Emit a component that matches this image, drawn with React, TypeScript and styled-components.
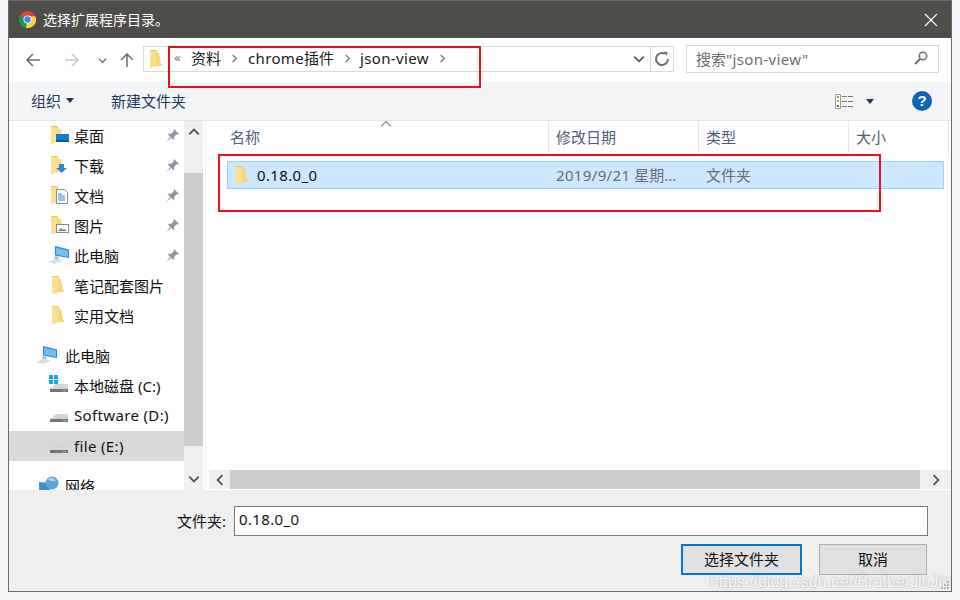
import React from "react";
import styled, { createGlobalStyle } from "styled-components";

const GlobalStyle = createGlobalStyle`
  html, body {
    margin: 0;
    background: #f5f6f8;
  }
  body {
    font-family: "Noto Sans", "Noto Sans CJK SC", sans-serif;
    font-size: 15px;
    overflow: hidden;
  }
`;

const Page = styled.div`
  width: 960px;
  height: 600px;
  padding-left: 8px;
  box-sizing: border-box;
`;

const Window = styled.div`
  position: relative;
  width: 944px;
  height: 592px;
  box-sizing: border-box;
  border: 1px solid #6a6a6a;
  display: flex;
  flex-direction: column;
  background: #fff;
`;

const Latin = styled.span`
  letter-spacing: 0.35px;
`;

const TitleBar = styled.div`
  height: 37px;
  flex: none;
  box-sizing: border-box;
  background: #4f4d4a;
  color: #fff;
  display: flex;
  align-items: center;
  padding: 0 13px 0 10px;
  gap: 7px;
  font-size: 14px;
`;

const TitleText = styled.span`
  padding-bottom: 2px;
`;

const CloseButton = styled.div`
  margin-left: auto;
  display: flex;
`;

const NavBar = styled.div`
  height: 44px;
  flex: none;
  box-sizing: border-box;
  padding: 0 0 2px 4px;
  display: flex;
  align-items: center;
`;

const NavButton = styled.div<{ $w: number }>`
  width: ${(p) => p.$w}px;
  height: 26px;
  padding-top: 2px;
  box-sizing: border-box;
  display: flex;
  align-items: center;
  justify-content: center;
`;

const AddressBar = styled.div`
  width: 531px;
  height: 26px;
  margin-left: 2px;
  box-sizing: border-box;
  border: 1px solid #d9d9d9;
  display: flex;
  align-items: center;
  padding-left: 5px;
  color: #1a1a1a;
`;

const Crumbs = styled.div`
  display: flex;
  align-items: center;
  margin-left: 12px;
  line-height: 22px;
  padding-bottom: 2px;
`;

const CrumbMark = styled.span`
  color: #777;
  font-size: 13px;
  width: 17px;
  margin-top: -2px;
`;

const CrumbSep = styled.span<{ $w: number }>`
  width: ${(p) => p.$w}px;
  display: flex;
  justify-content: center;
`;

const AddressTools = styled.div`
  margin-left: auto;
  display: flex;
  align-items: center;
  height: 100%;
`;

const AddressTool = styled.div<{ $line?: boolean }>`
  width: ${(p) => (p.$line ? 23 : 22)}px;
  height: 100%;
  box-sizing: border-box;
  display: flex;
  align-items: center;
  justify-content: center;
  ${(p) => (p.$line ? "border-left: 1px solid #d9d9d9;" : "")}
`;

const SearchBox = styled.div`
  width: 253px;
  height: 28px;
  margin-left: 12px;
  box-sizing: border-box;
  border: 1px solid #d9d9d9;
  display: flex;
  align-items: center;
  justify-content: space-between;
  padding: 0 10px 2px 9px;
  color: #6d6d6d;
`;

const Toolbar = styled.div`
  height: 39px;
  flex: none;
  box-sizing: border-box;
  background: #f4f5f7;
  border-bottom: 1px solid #e6e6e6;
  display: flex;
  align-items: center;
  padding: 0 19px 0 22px;
  color: #1e395b;
`;

const ToolItem = styled.div<{ $gap: number }>`
  display: flex;
  align-items: center;
  gap: 5px;
  margin-right: ${(p) => p.$gap}px;
  padding-bottom: 2px;
`;

const ToolRight = styled.div`
  margin-left: auto;
  display: flex;
  align-items: center;
  gap: 13px;
`;

const HelpIcon = styled.div`
  width: 20px;
  height: 20px;
  margin-left: 25px;
  border-radius: 50%;
  background: #0a64b8;
  color: #fff;
  font: bold 15px/20px "Liberation Sans", sans-serif;
  text-align: center;
`;

const Body = styled.div`
  height: 369px;
  flex: none;
  display: flex;
`;

const Sidebar = styled.div`
  width: 175px;
  flex: none;
  overflow: hidden;
  color: #111;
`;

const TreeGroup = styled.div`
  margin-bottom: 10px;
`;

const TreeRow = styled.div<{ $nested?: boolean; $active?: boolean }>`
  height: 30px;
  box-sizing: border-box;
  display: flex;
  align-items: center;
  padding: 0 5px ${(p) => (p.$active ? 1 : 2)}px ${(p) => (p.$nested ? 42 : 30)}px;
  background: ${(p) => (p.$active ? "#d9d9d9" : "transparent")};
  white-space: nowrap;
`;

const TreeIcon = styled.span<{ $nested?: boolean }>`
  width: ${(p) => (p.$nested ? 23 : 26)}px;
  flex: none;
  display: flex;
  align-items: center;
`;

const PinSlot = styled.span`
  margin-left: auto;
  display: flex;
`;

const VScroll = styled.div`
  width: 19px;
  flex: none;
  background: #efefef;
  display: flex;
  flex-direction: column;
  align-items: stretch;
`;

const VArrow = styled.div<{ $h: number; $end?: boolean }>`
  height: ${(p) => p.$h}px;
  box-sizing: border-box;
  padding: 5px 0;
  display: flex;
  align-items: ${(p) => (p.$end ? "flex-end" : "flex-start")};
  justify-content: center;
`;

const VThumb = styled.div`
  height: 273px;
  background: #cdcdcd;
`;

const Main = styled.div`
  position: relative;
  flex: 1;
  margin-left: 2px;
  border-left: 1px solid #f0f0f0;
  display: flex;
  flex-direction: column;
  min-width: 0;
`;

const HeaderRow = styled.div`
  height: 32px;
  flex: none;
  display: flex;
  color: #4c607a;
`;

const HeaderCell = styled.div<{ $w: number; $pad: number }>`
  width: ${(p) => p.$w}px;
  flex: none;
  box-sizing: border-box;
  padding-left: ${(p) => p.$pad}px;
  border-right: 1px solid #e5e5e5;
  line-height: 32px;
`;

const SortCaret = styled.div`
  position: absolute;
  left: 174px;
  top: -3px;
  display: flex;
`;

const FileArea = styled.div`
  flex: 1;
  padding: 8px 0 0 21px;
`;

const FileRow = styled.div`
  width: 717px;
  height: 28px;
  box-sizing: border-box;
  background: #cce8ff;
  border: 1px solid #99d1ff;
  display: flex;
  align-items: center;
  color: #6d6d6d;
`;

const FileCell = styled.div<{ $w: number; $pad: number }>`
  width: ${(p) => p.$w}px;
  flex: none;
  box-sizing: border-box;
  padding: 0 0 1px ${(p) => p.$pad}px;
  display: flex;
  align-items: center;
  white-space: nowrap;
`;

const FileName = styled(Latin)`
  color: #111;
  margin-left: 9px;
`;

const HScroll = styled.div`
  height: 19px;
  flex: none;
  margin-bottom: 1px;
  padding-left: 3px;
  display: flex;
`;

const HArrow = styled.div<{ $grow?: boolean }>`
  width: 21px;
  ${(p) => (p.$grow ? "flex: 1;" : "")}
  background: #efefef;
  display: flex;
  align-items: center;
  justify-content: center;
`;

const HThumb = styled.div`
  width: 690px;
  background: #cdcdcd;
`;

const Footer = styled.div`
  flex: 1;
  background: #efefef;
  padding-top: 16px;
`;

const NameRow = styled.div`
  display: flex;
  justify-content: flex-end;
  align-items: center;
  gap: 8px;
  padding-right: 23px;
  color: #111;
`;

const NameLabel = styled.span`
  padding-bottom: 2px;
`;

const NameInput = styled.div`
  width: 694px;
  height: 30px;
  box-sizing: border-box;
  border: 1px solid #7a7a7a;
  background: #fff;
  padding-left: 4px;
  line-height: 24px;
`;

const ButtonRow = styled.div`
  display: flex;
  justify-content: flex-end;
  gap: 17px;
  margin-top: 8px;
  padding-right: 24px;
`;

const DialogButton = styled.div<{ $primary?: boolean }>`
  width: ${(p) => (p.$primary ? 121 : 108)}px;
  height: 31px;
  box-sizing: border-box;
  border: ${(p) => (p.$primary ? "2px solid #0078d7" : "1px solid #adadad")};
  background: #e1e1e1;
  color: #111;
  padding-bottom: 2px;
  display: flex;
  align-items: center;
  justify-content: center;
`;

const RedBox = styled.div<{ $l: number; $t: number; $w: number; $h: number }>`
  position: absolute;
  left: ${(p) => p.$l}px;
  top: ${(p) => p.$t}px;
  width: ${(p) => p.$w}px;
  height: ${(p) => p.$h}px;
  box-sizing: border-box;
  border: 2px solid #e81123;
  pointer-events: none;
`;

const Watermark = styled.div`
  position: absolute;
  right: 0;
  bottom: -1px;
  font: 16px/20px "Liberation Sans", sans-serif;
  color: rgba(255, 255, 255, 0.9);
  text-shadow: 0 0 2px rgba(90, 90, 90, 0.55);
  white-space: nowrap;
`;

const Grip = styled.svg`
  position: absolute;
  right: 1px;
  bottom: 1px;
`;

const FolderIcon = () => (
  <svg width="13" height="18" viewBox="0 0 13 18">
    <path d="M1 0h6l1 1v15l-7 2z" fill="#f3c64f" />
    <path d="M1 1h6v15l-6 2z" fill="#fbe08f" />
    <path d="M7 3h3l2 11h1v2H7z" fill="#f6d87a" />
  </svg>
);

const Pin = () => (
  <svg width="13" height="13" viewBox="0 0 13 13">
    <path d="M8 0l5 5-1.5.6-.8-.4L8 8l.4 2-1 1L2 5.600l1-1 2 .4 2.800-2.700-.4-.8z" fill="#8a96a3" />
    <path d="M4 8l1 1-4.500 4z" fill="#8a96a3" />
  </svg>
);

const Overlay = ({ children }: { children: React.ReactNode }) => (
  <svg width="20" height="20" viewBox="0 0 20 20">
    <g transform="translate(0 1)">
      <path d="M0 0h6l1 1v15l-7 2z" fill="#f3c64f" />
      <path d="M0 1h6v15l-6 2z" fill="#fbe08f" />
      <path d="M6 3h4l1 11H6z" fill="#f6d87a" />
    </g>
    {children}
  </svg>
);

const Monitor = () => (
  <svg width="22" height="20" viewBox="0 0 22 20" style={{ marginLeft: -3, flex: "none" }}>
    <path d="M7 1l14 3.500v8.500L7 10.500z" fill="#2e86c8" />
    <path d="M8 2.500l12 3v6.500L8 9.500z" fill="#6fc0f3" />
    <path d="M0 17l8-3.500 7 2-8 3.500z" fill="#dcdfe3" />
    <path d="M7 11l4 1-1 2.500-4-1z" fill="#b6bcc2" />
  </svg>
);

const Drive = ({ win }: { win?: boolean }) => (
  <svg width="20" height="20" viewBox="0 0 20 20" style={{ marginLeft: -2, flex: "none" }}>
    {win && (
      <g fill="#12a9ea">
        <rect x="0" y="0" width="4" height="4" />
        <rect x="5" y="0" width="4" height="4" />
        <rect x="0" y="5" width="4" height="4" />
        <rect x="5" y="5" width="4" height="4" />
      </g>
    )}
    <path d="M1 14l6-5h12v5z" fill="#d5d5d5" />
    <path d="M1 14h18v3H1z" fill="#757575" />
    <rect x="14" y="15" width="3" height="1.500" fill="#63c06a" />
  </svg>
);

const Network = () => (
  <svg width="21" height="18" viewBox="0 0 21 18">
    <path d="M0 6l11 1v10H0z" fill="#3d8fd0" />
    <circle cx="13" cy="7" r="6.500" fill="#5aa6dc" />
    <path d="M9 3c3-2 6-1 8 2-3 0-6 1-8-2z" fill="#a7d8f4" />
  </svg>
);

const Chevron = ({ dir, color = "#666", size = 10, sw = 1.6 }: { dir: "up" | "down" | "left" | "right"; color?: string; size?: number; sw?: number }) => {
  const d = { up: "M1 7l4-4 4 4", down: "M1 3l4 4 4-4", left: "M7 1L3 5l4 4", right: "M3 1l4 4-4 4" }[dir];
  return (
    <svg width={size} height={size} viewBox="0 0 10 10">
      <path d={d} fill="none" stroke={color} strokeWidth={sw} />
    </svg>
  );
};

const Arrow = ({ rot, color }: { rot: number; color: string }) => (
  <svg width="16" height="16" viewBox="0 0 16 16" style={{ transform: `rotate(${rot}deg)` }}>
    <path d="M15 8H2M8 2L2 8l6 6" fill="none" stroke={color} strokeWidth="1.500" />
  </svg>
);

const Caret = () => (
  <svg width="8" height="5" viewBox="0 0 8 5">
    <path d="M0 0h8L4 5z" fill="#1e395b" />
  </svg>
);

const pinned = [
  {
    name: "桌面",
    icon: (
      <Overlay>
        <rect x="5" y="9" width="13" height="8" fill="#0f7fd0" />
        <rect x="5" y="15" width="13" height="2" fill="#0a5a9a" />
      </Overlay>
    ),
  },
  {
    name: "下载",
    icon: (
      <Overlay>
        <path d="M8 9h5v4h3l-5.500 5L5 13h3z" fill="#2f86d6" />
      </Overlay>
    ),
  },
  {
    name: "文档",
    icon: (
      <Overlay>
        <path d="M5.500 4.500h8l3 3v11h-11z" fill="#fff" stroke="#8a8a8a" />
        <path d="M7 9h4M7 11h7M7 13h7M7 15h7" stroke="#3a87c8" />
      </Overlay>
    ),
  },
  {
    name: "图片",
    icon: (
      <Overlay>
        <rect x="5.500" y="9.500" width="12" height="8" fill="#fff" stroke="#8a8a8a" />
        <path d="M7 16l3-3 2 2 1-1 3 2z" fill="#5a8a78" />
      </Overlay>
    ),
  },
];

export default function App() {
  return (
    <Page>
      <GlobalStyle />
      <Window>
        <TitleBar>
          <svg width="17" height="17" viewBox="0 0 17 17">
            <circle cx="8.500" cy="8.500" r="8.500" fill="#db4437" />
            <path d="M8.500 8.500L1.200 4.200A8.500 8.500 0 0 0 7 16.900z" fill="#0f9d58" />
            <path d="M8.500 8.500L7 16.900A8.500 8.500 0 0 0 16.500 5.500L8.500 5z" fill="#ffcd40" />
            <circle cx="8.500" cy="8.500" r="4" fill="#fff" />
            <circle cx="8.500" cy="8.500" r="3.200" fill="#4285f4" />
          </svg>
          <TitleText>选择扩展程序目录。</TitleText>
          <CloseButton>
            <svg width="14" height="14" viewBox="0 0 14 14">
              <path d="M1 1l12 12M13 1L1 13" stroke="#fff" strokeWidth="1.100" />
            </svg>
          </CloseButton>
        </TitleBar>

        <NavBar>
          <NavButton $w={39}><Arrow rot={0} color="#6b6b6b" /></NavButton>
          <NavButton $w={39}><Arrow rot={180} color="#c9c9c9" /></NavButton>
          <NavButton $w={22}><Chevron dir="down" color="#777" size={9} /></NavButton>
          <NavButton $w={28}><Arrow rot={90} color="#6b6b6b" /></NavButton>
          <AddressBar>
            <FolderIcon />
            <Crumbs>
              <CrumbMark>«</CrumbMark>
              <span>资料</span>
              <CrumbSep $w={27}><Chevron dir="right" color="#808080" size={9} /></CrumbSep>
              <Latin>chrome</Latin>
              <span>插件</span>
              <CrumbSep $w={26}><Chevron dir="right" color="#808080" size={9} /></CrumbSep>
              <Latin>json-view</Latin>
              <CrumbSep $w={27}><Chevron dir="right" color="#808080" size={9} /></CrumbSep>
            </Crumbs>
            <AddressTools>
              <AddressTool><Chevron dir="down" color="#555" size={12} sw={1.4} /></AddressTool>
              <AddressTool $line>
                <svg width="16" height="16" viewBox="0 0 16 16">
                  <path d="M11 2.800A6 6 0 1 0 14 8" fill="none" stroke="#707070" strokeWidth="2" />
                  <path d="M9.500 0.500l4 .5-.5 4z" fill="#707070" />
                </svg>
              </AddressTool>
            </AddressTools>
          </AddressBar>
          <SearchBox>
            <span>搜索<Latin>"json-view"</Latin></span>
            <svg width="14" height="14" viewBox="0 0 14 14">
              <circle cx="9" cy="5" r="3.700" fill="none" stroke="#707070" strokeWidth="1.500" />
              <path d="M6 8l-5 5" stroke="#707070" strokeWidth="2" />
            </svg>
          </SearchBox>
        </NavBar>

        <Toolbar>
          <ToolItem $gap={37}>组织<Caret /></ToolItem>
          <ToolItem $gap={0}>新建文件夹</ToolItem>
          <ToolRight>
            <svg width="18" height="15" viewBox="0 0 18 15">
              <rect x="0.500" y="0.500" width="5" height="14" fill="#fff" stroke="#9a9a9a" />
              <rect x="2" y="2" width="2" height="2" fill="#8aa04a" />
              <rect x="2" y="6" width="2" height="2" fill="#d0a030" />
              <rect x="2" y="11" width="2" height="2" fill="#b04020" />
              <path d="M7 2.500h11M7 7.500h11M7 12.500h11" stroke="#777" strokeDasharray="5 1" />
            </svg>
            <Caret />
            <HelpIcon>?</HelpIcon>
          </ToolRight>
        </Toolbar>

        <Body>
          <Sidebar>
            <TreeGroup>
              {pinned.map((item) => (
                <TreeRow $nested key={item.name}>
                  <TreeIcon $nested>{item.icon}</TreeIcon>
                  {item.name}
                  <PinSlot><Pin /></PinSlot>
                </TreeRow>
              ))}
              <TreeRow $nested>
                <TreeIcon $nested><Monitor /></TreeIcon>
                此电脑
                <PinSlot><Pin /></PinSlot>
              </TreeRow>
              <TreeRow $nested>
                <TreeIcon $nested><FolderIcon /></TreeIcon>
                笔记配套图片
              </TreeRow>
              <TreeRow $nested>
                <TreeIcon $nested><FolderIcon /></TreeIcon>
                实用文档
              </TreeRow>
            </TreeGroup>
            <TreeGroup>
              <TreeRow>
                <TreeIcon><Monitor /></TreeIcon>
                此电脑
              </TreeRow>
              <TreeRow $nested>
                <TreeIcon $nested><Drive win /></TreeIcon>
                本地磁盘 (C:)
              </TreeRow>
              <TreeRow $nested>
                <TreeIcon $nested><Drive /></TreeIcon>
                <Latin>Software (D:)</Latin>
              </TreeRow>
              <TreeRow $nested $active>
                <TreeIcon $nested><Drive /></TreeIcon>
                <Latin>file (E:)</Latin>
              </TreeRow>
            </TreeGroup>
            <TreeRow>
              <TreeIcon><Network /></TreeIcon>
              网络
            </TreeRow>
          </Sidebar>
          <VScroll>
            <VArrow $h={52}><Chevron dir="up" color="#555" size={12} sw={1.5} /></VArrow>
            <VThumb />
            <VArrow $h={44} $end><Chevron dir="down" color="#555" size={12} sw={1.5} /></VArrow>
          </VScroll>
          <Main>
            <HeaderRow>
              <HeaderCell $w={343} $pad={24}>名称</HeaderCell>
              <HeaderCell $w={150} $pad={7}>修改日期</HeaderCell>
              <HeaderCell $w={150} $pad={7}>类型</HeaderCell>
              <HeaderCell $w={100} $pad={7}>大小</HeaderCell>
            </HeaderRow>
            <SortCaret>
              <Chevron dir="up" color="#888" size={12} sw={1} />
            </SortCaret>
            <FileArea>
              <FileRow>
                <FileCell $w={321} $pad={7}>
                  <FolderIcon />
                  <FileName>0.18.0_0</FileName>
                </FileCell>
                <FileCell $w={150} $pad={7}><Latin>2019/9/21</Latin>&nbsp;星期...</FileCell>
                <FileCell $w={150} $pad={7}>文件夹</FileCell>
              </FileRow>
            </FileArea>
            <HScroll>
              <HArrow><Chevron dir="left" color="#555" size={12} sw={1.5} /></HArrow>
              <HThumb />
              <HArrow $grow><Chevron dir="right" color="#555" size={12} sw={1.5} /></HArrow>
            </HScroll>
          </Main>
        </Body>

        <Footer>
          <NameRow>
            <NameLabel>文件夹:</NameLabel>
            <NameInput><Latin>0.18.0_0</Latin></NameInput>
          </NameRow>
          <ButtonRow>
            <DialogButton $primary>选择文件夹</DialogButton>
            <DialogButton>取消</DialogButton>
          </ButtonRow>
        </Footer>

        <RedBox $l={159} $t={45} $w={313} $h={42} />
        <RedBox $l={209} $t={153} $w={663} $h={58} />
        <Watermark>https://blog.csdn.net/BrotherJinJin</Watermark>
        <Grip width="10" height="10" viewBox="0 0 10 10">
          <g fill="#b5b5b5">
            <rect x="7" y="1" width="2" height="2" />
            <rect x="4" y="4" width="2" height="2" />
            <rect x="7" y="4" width="2" height="2" />
            <rect x="1" y="7" width="2" height="2" />
            <rect x="4" y="7" width="2" height="2" />
            <rect x="7" y="7" width="2" height="2" />
          </g>
        </Grip>
      </Window>
    </Page>
  );
}
